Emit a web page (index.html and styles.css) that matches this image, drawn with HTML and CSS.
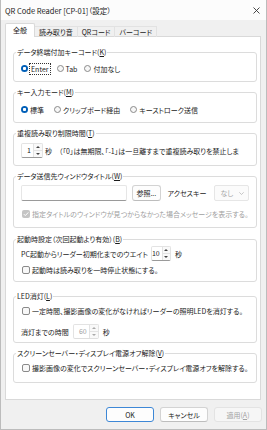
FILE: index.html
```html
<!DOCTYPE html>
<html>
  <head>
    <title>QR Code Reader [CP-01]（設定）</title>
    <link rel="stylesheet" href="styles.css">
  </head>
  <body>
    <div class="window">
      <div class="titlebar">
        <span class="titlebar__text">QR Code Reader [CP-01]（設定）</span>
        <svg class="titlebar__close" width="7" height="7" viewBox="0 0 7 7">
          <path d="M0.5 0.5 L6.5 6.5 M6.5 0.5 L0.5 6.5" stroke="#333" stroke-width="0.9" fill="none"/>
        </svg>
      </div>

      <div class="tabs">
        <div class="tab tab--active">全般</div>
        <div class="tab">読み取り音</div>
        <div class="tab">QRコード</div>
        <div class="tab">バーコード</div>
      </div>

      <div class="panel">
        <fieldset class="group group--g1">
          <legend>データ終端付加キーコード(<u>K</u>)</legend>
          <div class="row">
            <label class="radio"><span class="radio__mark radio__mark--on"></span><span class="focus">Enter</span></label>
            <label class="radio"><span class="radio__mark"></span>Tab</label>
            <label class="radio"><span class="radio__mark"></span>付加なし</label>
          </div>
        </fieldset>

        <fieldset class="group group--g2">
          <legend>キー入力モード(<u>M</u>)</legend>
          <div class="row">
            <label class="radio radio--wide"><span class="radio__mark radio__mark--on"></span>標準</label>
            <label class="radio radio--wide"><span class="radio__mark"></span>クリップボード経由</label>
            <label class="radio radio--wide"><span class="radio__mark"></span>キーストローク送信</label>
          </div>
        </fieldset>

        <fieldset class="group group--g3">
          <legend>重複読み取り制限時間(<u>T</u>)</legend>
          <div class="row row--spin">
            <div class="spin spin--small">
              <span class="spin__value">1</span>
              <span class="spin__arrows"><span class="spin__up"></span><span class="spin__down"></span></span>
            </div>
            <span class="hint">秒　（「0」は無期限、「-1」は一旦離すまで重複読み取りを禁止しま</span>
          </div>
        </fieldset>

        <fieldset class="group group--g4">
          <legend>データ送信先ウィンドウタイトル(<u>W</u>)</legend>
          <div class="row row--field">
            <div class="textbox"></div>
            <div class="button button--browse">参照...</div>
            <span class="field-label">アクセスキー</span>
            <div class="select select--disabled">
              <span>なし</span>
              <svg width="5" height="3" viewBox="0 0 5 3"><polyline points="0.3,0.3 2.5,2.5 4.7,0.3" stroke="#b0b0b0" stroke-width="0.7" fill="none"/></svg>
            </div>
          </div>
          <div class="row row--gap7">
            <label class="check-label check-label--disabled">
              <span class="check check--on-disabled">
                <svg width="8" height="8" viewBox="0 0 8 8"><path d="M1.8 4.1 L3.3 5.6 L6.3 2.4" stroke="#fff" stroke-width="1" fill="none"/></svg>
              </span>
              指定タイトルのウィンドウが見つからなかった場合メッセージを表示する。
            </label>
          </div>
        </fieldset>

        <fieldset class="group group--g5">
          <legend>起動時設定（次回起動より有効）(<u>B</u>)</legend>
          <div class="row row--spin">
            <span class="field-label field-label--first">PC起動からリーダー初期化までのウエイト</span>
            <div class="spin spin--mid">
              <span class="spin__value">10</span>
              <span class="spin__arrows"><span class="spin__up"></span><span class="spin__down"></span></span>
            </div>
            <span class="unit">秒</span>
          </div>
          <div class="row row--gap3">
            <label class="check-label"><span class="check"></span>起動時は読み取りを一時停止状態にする。</label>
          </div>
        </fieldset>

        <fieldset class="group group--g6">
          <legend>LED消灯(<u>L</u>)</legend>
          <div class="row">
            <label class="check-label"><span class="check"></span>一定時間、撮影画像の変化がなければリーダーの照明LEDを消灯する。</label>
          </div>
          <div class="row row--spin row--gap8">
            <span class="field-label field-label--first">消灯までの時間</span>
            <div class="spin spin--wide spin--disabled">
              <span class="spin__value">60</span>
              <span class="spin__arrows"><span class="spin__up"></span><span class="spin__down"></span></span>
            </div>
            <span class="unit">秒</span>
          </div>
        </fieldset>

        <fieldset class="group group--g7">
          <legend>スクリーンセーバー・ディスプレイ電源オフ解除(<u>V</u>)</legend>
          <div class="row">
            <label class="check-label"><span class="check"></span>撮影画像の変化でスクリーンセーバー・ディスプレイ電源オフを解除する。</label>
          </div>
        </fieldset>
      </div>

      <div class="footer">
        <div class="button button--default">OK</div>
        <div class="button">キャンセル</div>
        <div class="button button--disabled">適用(<u>A</u>)</div>
      </div>
    </div>
  </body>
</html>
```

FILE: styles.css
```css
* {
  box-sizing: border-box;
  margin: 0;
  padding: 0;
}

body {
  font-family: "Noto Sans CJK JP", sans-serif;
  font-size: 7px;
  font-feature-settings: "palt";
  color: #1b1b1b;
  background-color: #fff;
}

u {
  text-decoration-thickness: 0.6px;
  text-underline-offset: 1px;
}

.window {
  width: 267px;
  height: 430px;
  background-color: #f0f0f0;
  border: 1px solid #bcbcbc;
  border-top: none;
}

/* title bar */

.titlebar {
  height: 20px;
  display: flex;
  align-items: center;
  justify-content: space-between;
  padding: 0 6px 0 4px;
  background-color: #fcfcfc;
}

.titlebar__text {
  font-size: 7.5px;
}

/* tabs */

.tabs {
  height: 17px;
  display: flex;
  align-items: flex-end;
  padding-left: 4px;
  margin-bottom: -1px;
  position: relative;
  z-index: 1;
}

.tab {
  height: 11px;
  line-height: 10px;
  padding: 0 4px;
  border: 1px solid #e2e2e2;
  border-bottom: none;
  border-left: none;
  white-space: nowrap;
}

.tab--active {
  height: 14px;
  line-height: 13px;
  padding: 0 7px;
  background-color: #fff;
  border: 1px solid #d9d9d9;
  border-bottom: none;
  border-radius: 2px 2px 0 0;
}

/* panel */

.panel {
  height: 364px;
  margin: 0 5px 0 4px;
  padding: 10px 3px 0 7px;
  background-color: #fff;
  border: 1px solid #d9d9d9;
}

.group {
  border: 1px solid #dcdcdc;
  border-radius: 3px;
  padding: 6px 7px 7px;
  margin-bottom: 5px;
  min-width: 0;
}

.group legend {
  line-height: 10px;
  padding: 0 1px;
  margin-left: -5px;
}

.group--g2 { padding-top: 7px; }
.group--g3 { padding-top: 5px; }
.group--g4 { padding-top: 4px; padding-bottom: 8px; margin-bottom: 6px; }
.group--g5 { padding-top: 2px; padding-bottom: 6px; margin-bottom: 9px; }
.group--g6 { padding-top: 4px; padding-bottom: 3px; }
.group--g7 { padding-top: 4px; padding-bottom: 9px; }

.row {
  height: 11px;
  display: flex;
  align-items: center;
  white-space: nowrap;
}

.row--spin { height: 15px; }
.row--field { height: 16px; }
.row--gap3 { margin-top: 3px; }
.row--gap7 { margin-top: 7px; }
.row--gap8 { margin-top: 8px; }

/* radio buttons */

.radio {
  display: flex;
  align-items: center;
  gap: 2px;
  margin-right: 7px;
}

.radio--wide {
  margin-right: 10px;
}

.radio__mark {
  width: 7px;
  height: 7px;
  border-radius: 50%;
  border: 1px solid #8a8a8a;
  background-color: #f7f7f7;
}

.radio__mark--on {
  border: none;
  background: radial-gradient(circle, #fff 1.3px, #005fb8 1.9px);
}

.focus {
  outline: 1px dotted #333;
  outline-offset: 0;
  padding: 0 1px;
  line-height: 10px;
}

/* check boxes */

.check-label {
  display: flex;
  align-items: center;
  gap: 2px;
  margin-left: 1px;
}

.check-label--disabled {
  color: #a0a0a0;
}

.check {
  width: 8px;
  height: 8px;
  border: 1px solid #8a8a8a;
  border-radius: 2px;
  background-color: #f8f8f8;
  display: flex;
}

.check--on-disabled {
  border: none;
  background-color: #c5c5c5;
}

/* spin boxes */

.spin {
  height: 15px;
  display: flex;
  align-items: stretch;
  background-color: #fff;
  border: 1px solid #e3e3e3;
  border-bottom-color: #9a9a9a;
  border-radius: 2px;
}

.spin--small { width: 22px; }
.spin--mid { width: 20px; margin-left: 3px; }
.spin--wide { width: 26px; margin-left: 4px; }

.spin__value {
  flex: 1;
  text-align: right;
  line-height: 13px;
  padding-right: 2px;
}

.spin--disabled {
  border-bottom-color: #dedede;
}

.spin--disabled .spin__value {
  color: #a0a0a0;
}

.spin__arrows {
  width: 9px;
  display: flex;
  flex-direction: column;
  border-left: 1px solid #e3e3e3;
}

.spin__up,
.spin__down {
  flex: 1;
  display: flex;
  align-items: center;
  justify-content: center;
  background-color: #f9f9f9;
}

.spin__up {
  border-bottom: 1px solid #e3e3e3;
}

.spin__up::after,
.spin__down::after {
  content: "";
  border-left: 2px solid transparent;
  border-right: 2px solid transparent;
}

.spin__up::after {
  border-bottom: 2px solid #444;
}

.spin__down::after {
  border-top: 2px solid #444;
}

.spin--disabled .spin__up::after {
  border-bottom-color: #aaa;
}

.spin--disabled .spin__down::after {
  border-top-color: #aaa;
}

.hint {
  margin-left: 2px;
}

.unit {
  margin-left: 4px;
}

/* window title row */

.textbox {
  width: 108px;
  height: 16px;
  border: 1px solid #e6e6e6;
  border-bottom-color: #9a9a9a;
  border-radius: 2px;
}

.field-label {
  margin: 0 8px 0 7px;
}

.field-label--first {
  margin: 0;
}

.select {
  width: 35px;
  height: 16px;
  display: flex;
  align-items: center;
  justify-content: space-between;
  padding: 0 4px 0 5px;
  border: 1px solid #e6e6e6;
  border-radius: 2px;
}

.select--disabled {
  color: #a8a8a8;
  background-color: #fbfbfb;
}

/* buttons */

.button {
  height: 15px;
  display: flex;
  align-items: center;
  justify-content: center;
  background-color: #fdfdfd;
  border: 1px solid #d3d3d3;
  border-bottom-color: #bdbdbd;
  border-radius: 3px;
  white-space: nowrap;
}

.button--browse {
  width: 29px;
  height: 16px;
  margin-left: 5px;
}

.footer {
  display: flex;
  justify-content: flex-end;
  gap: 6px;
  padding: 7px 4px 0 0;
}

.footer .button {
  width: 48px;
}

.button--default {
  border-color: #3d87d6;
}

.button--disabled {
  color: #a3a3a3;
  background-color: #f6f6f6;
  border-color: #e3e3e3;
}
```
